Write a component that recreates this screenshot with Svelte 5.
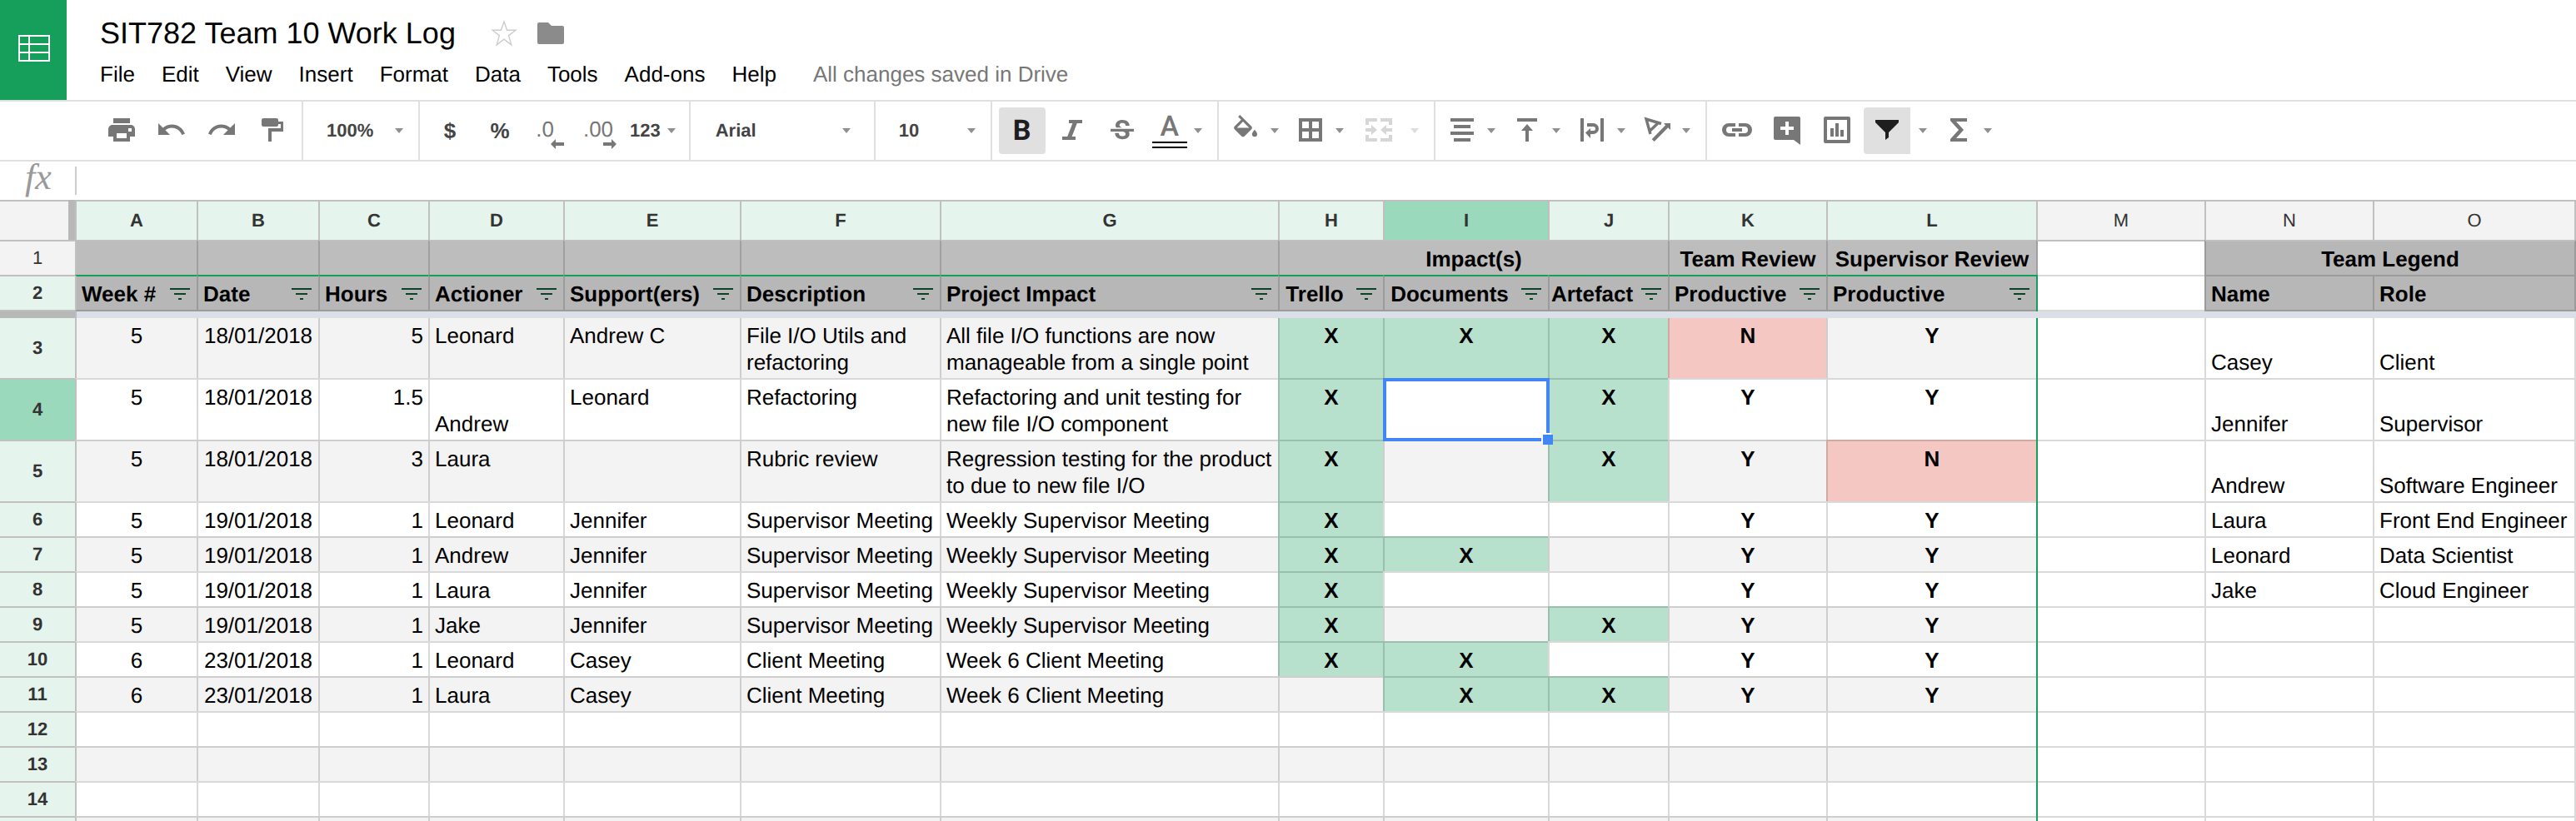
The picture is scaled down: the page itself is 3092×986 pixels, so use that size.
<script>
  const menus = ['File', 'Edit', 'View', 'Insert', 'Format', 'Data', 'Tools', 'Add-ons', 'Help'];

  const columns = [
    { id: 'A', width: 146 },
    { id: 'B', width: 146 },
    { id: 'C', width: 132 },
    { id: 'D', width: 162 },
    { id: 'E', width: 212 },
    { id: 'F', width: 240 },
    { id: 'G', width: 406 },
    { id: 'H', width: 126 },
    { id: 'I', width: 198 },
    { id: 'J', width: 144 },
    { id: 'K', width: 190 },
    { id: 'L', width: 252 },
    { id: 'M', width: 202, plain: true },
    { id: 'N', width: 202, plain: true },
    { id: 'O', width: 244, plain: true }
  ];

  const filters = [
    'Week #', 'Date', 'Hours', 'Actioner', 'Support(ers)', 'Description',
    'Project Impact', 'Trello', 'Documents', 'Artefact', 'Productive', 'Productive'
  ];

  const rows = [
    { n: 3, cells: ['5', '18/01/2018', '5', 'Leonard', 'Andrew C', 'File I/O Utils and\nrefactoring', 'All file I/O functions are now\nmanageable from a single point', 'X', 'X', 'X', 'N', 'Y', '', 'Casey', 'Client'] },
    { n: 4, cells: ['5', '18/01/2018', '1.5', 'Andrew', 'Leonard', 'Refactoring', 'Refactoring and unit testing for\nnew file I/O component', 'X', '', 'X', 'Y', 'Y', '', 'Jennifer', 'Supervisor'] },
    { n: 5, cells: ['5', '18/01/2018', '3', 'Laura', '', 'Rubric review', 'Regression testing for the product\nto due to new file I/O', 'X', '', 'X', 'Y', 'N', '', 'Andrew', 'Software Engineer'] },
    { n: 6, cells: ['5', '19/01/2018', '1', 'Leonard', 'Jennifer', 'Supervisor Meeting', 'Weekly Supervisor Meeting', 'X', '', '', 'Y', 'Y', '', 'Laura', 'Front End Engineer'] },
    { n: 7, cells: ['5', '19/01/2018', '1', 'Andrew', 'Jennifer', 'Supervisor Meeting', 'Weekly Supervisor Meeting', 'X', 'X', '', 'Y', 'Y', '', 'Leonard', 'Data Scientist'] },
    { n: 8, cells: ['5', '19/01/2018', '1', 'Laura', 'Jennifer', 'Supervisor Meeting', 'Weekly Supervisor Meeting', 'X', '', '', 'Y', 'Y', '', 'Jake', 'Cloud Engineer'] },
    { n: 9, cells: ['5', '19/01/2018', '1', 'Jake', 'Jennifer', 'Supervisor Meeting', 'Weekly Supervisor Meeting', 'X', '', 'X', 'Y', 'Y', '', '', ''] },
    { n: 10, cells: ['6', '23/01/2018', '1', 'Leonard', 'Casey', 'Client Meeting', 'Week 6 Client Meeting', 'X', 'X', '', 'Y', 'Y', '', '', ''] },
    { n: 11, cells: ['6', '23/01/2018', '1', 'Laura', 'Casey', 'Client Meeting', 'Week 6 Client Meeting', '', 'X', 'X', 'Y', 'Y', '', '', ''] },
    { n: 12, cells: Array(15).fill('') },
    { n: 13, cells: Array(15).fill('') },
    { n: 14, cells: Array(15).fill('') },
    { n: '', band: true, cells: Array(15).fill('') }
  ];

  function cellClass(row, text, i) {
    const list = [];
    if (i < 2) list.push('center');
    if (i === 2) list.push('right');
    if (i > 6 && i < 12) list.push('center', 'strong');
    if (i < 12 && (row.band || row.n % 2 === 1)) list.push('band');
    if (text === 'X') list.push('yes');
    if (text === 'N') list.push('no');
    if (i === 12) list.push('range-edge');
    if (i > 12 || (row.n === 4 && i === 3)) list.push('low');
    return list.join(' ');
  }
</script>

{#snippet caret(dim = false)}
  <svg class="caret" class:dim width="10" height="6" viewBox="0 0 10 6" aria-hidden="true"><path d="M0 0h10L5 6z" /></svg>
{/snippet}

<div class="page">
  <header>
    <a class="logo" href="#home" aria-label="Sheets home">
      <svg width="38" height="32" viewBox="0 0 38 32" fill="none" stroke="#fff" stroke-width="2">
        <path d="M1 1h36v30H1zM1 11h36M1 21h36M13 1v30" />
      </svg>
    </a>
    <div class="heading">
      <div class="title">
        <h1>SIT782 Team 10 Work Log</h1>
        <button class="star" aria-label="Star">
          <svg width="32" height="32" viewBox="0 0 32 32" fill="none" stroke="#ccc" stroke-width="1.4">
            <path d="M16 2l3.6 10.2H30l-8.4 6.4 3.2 11.2-8.8-6.7-8.8 6.7 3.2-11.2L2 12.2h10.4z" />
          </svg>
        </button>
        <button class="folder" aria-label="Move to folder">
          <svg width="32" height="26" viewBox="0 0 32 26" fill="#8b8b8b">
            <path d="M2 0h11l4 4h13a2 2 0 0 1 2 2v18a2 2 0 0 1-2 2H2a2 2 0 0 1-2-2V2a2 2 0 0 1 2-2z" />
          </svg>
        </button>
      </div>
      <nav>
        {#each menus as item}
          <button>{item}</button>
        {/each}
        <span class="status">All changes saved in Drive</span>
      </nav>
    </div>
  </header>

  <div class="toolbar">
    <div class="group tools">
      <button aria-label="Print">
        <svg class="icon" viewBox="0 0 36 36"><path fill-rule="evenodd" d="M8 4h20v6H8zM7 12h22a5 5 0 0 1 5 5v9h-6v6H8v-6H2v-9a5 5 0 0 1 5-5zM12 22v6h12v-6zM26 16v4h4v-4z" /></svg>
      </button>
      <button aria-label="Undo">
        <svg class="icon" viewBox="0 0 36 36"><path transform="translate(-1.1 -1) scale(1.56)" d="M12.5 8c-2.65 0-5.05.99-6.9 2.6L2 7v9h9l-3.62-3.62c1.39-1.16 3.16-1.88 5.12-1.88 3.54 0 6.55 2.31 7.6 5.5l2.37-.78C21.08 11.03 17.15 8 12.5 8z" /></svg>
      </button>
      <button aria-label="Redo">
        <svg class="icon" viewBox="0 0 36 36"><path transform="translate(37.1 -1) scale(-1.56 1.56)" d="M12.5 8c-2.65 0-5.05.99-6.9 2.6L2 7v9h9l-3.62-3.62c1.39-1.16 3.16-1.88 5.12-1.88 3.54 0 6.55 2.31 7.6 5.5l2.37-.78C21.08 11.03 17.15 8 12.5 8z" /></svg>
      </button>
      <button aria-label="Paint format">
        <svg class="icon" viewBox="0 0 36 36"><path d="M8 4h16a2 2 0 0 1 2 2v2h6v12H18v12h-4V16h15v-5h-3v1a2 2 0 0 1-2 2H8a2 2 0 0 1-2-2V6a2 2 0 0 1 2-2z" /></svg>
      </button>
    </div>

    <div class="group">
      <label class="drop">
        <select aria-label="Zoom"><option>100%</option></select>
        {@render caret()}
      </label>
    </div>

    <div class="group formats">
      <button class="sign">$</button>
      <button class="sign">%</button>
      <button class="decimal">
        <span>.0</span>
        <svg width="16" height="12" viewBox="0 0 16 12" aria-hidden="true"><path d="M0 6l6-6v4h10v4H6v4z" /></svg>
      </button>
      <button class="decimal">
        <span>.00</span>
        <svg width="16" height="12" viewBox="0 0 16 12" aria-hidden="true"><path d="M16 6l-6-6v4H0v4h10v4z" /></svg>
      </button>
      <button class="more">123{@render caret()}</button>
    </div>

    <div class="group">
      <label class="drop font">
        <select aria-label="Font"><option>Arial</option></select>
        {@render caret()}
      </label>
    </div>

    <div class="group">
      <label class="drop">
        <select aria-label="Font size"><option>10</option></select>
        {@render caret()}
      </label>
    </div>

    <div class="group styles">
      <button class="square on bold">B</button>
      <button class="square" aria-label="Italic">
        <svg class="icon" viewBox="0 0 36 36"><path d="M14 6h16v4h-6.200L17.600 26H22v4H6v-4h6.200L18.400 10H14z" /></svg>
      </button>
      <button class="square" aria-label="Strikethrough">
        <svg class="icon" viewBox="0 0 36 36"><path transform="translate(-.6 1.300) scale(1.55)" d="M7.240 8.750c-.26-.48-.39-1.030-.39-1.670 0-.61.13-1.160.4-1.670.26-.5.63-.93 1.110-1.290.48-.35 1.050-.63 1.700-.83.66-.19 1.390-.29 2.180-.29.81 0 1.540.11 2.210.34.66.22 1.230.54 1.690.94.47.4.83.88 1.080 1.430.25.55.38 1.150.38 1.810h-3.010c0-.31-.05-.59-.15-.85-.09-.27-.24-.49-.44-.68-.2-.19-.45-.33-.75-.44-.3-.1-.66-.16-1.060-.16-.39 0-.74.04-1.030.13-.29.09-.53.21-.72.36-.19.16-.34.34-.44.55-.1.21-.15.43-.15.66 0 .48.25.88.74 1.210.38.25.77.48 1.410.7H7.390c-.05-.08-.11-.17-.15-.25zM21 12v-2H3v2h9.620c.18.07.4.14.55.2.37.17.66.34.87.51.21.17.35.36.43.57.07.2.11.43.11.69 0 .23-.05.45-.14.66-.09.2-.23.38-.42.53-.19.15-.42.26-.71.35-.29.08-.63.13-1.010.13-.43 0-.83-.04-1.180-.13s-.66-.23-.91-.42c-.25-.19-.45-.44-.59-.75-.14-.31-.25-.76-.25-1.210H6.400c0 .55.08 1.130.24 1.580.16.45.37.85.65 1.210.28.35.6.66.98.92.37.26.78.48 1.220.65.44.17.9.3 1.380.39.48.08.96.13 1.440.13.8 0 1.530-.09 2.180-.28s1.210-.45 1.670-.79c.46-.34.82-.77 1.070-1.270s.38-1.070.38-1.710c0-.6-.1-1.140-.31-1.610-.05-.11-.11-.23-.17-.33H21z" /></svg>
      </button>
      <button class="color">
        <span class="ink">A</span>
        {@render caret()}
      </button>
    </div>

    <div class="group pairs">
      <button aria-label="Fill color">
        <svg class="icon" viewBox="0 0 36 36"><path transform="translate(-.5 0) scale(1.55)" d="M16.560 8.940L7.620 0 6.210 1.410l2.380 2.380-5.150 5.150c-.59.59-.59 1.540 0 2.120l5.500 5.500c.29.29.68.44 1.060.44s.77-.15 1.060-.44l5.500-5.500c.59-.58.59-1.530 0-2.120zM5.210 10L10 5.210 14.790 10H5.210zM19 11.500s-2 2.170-2 3.500c0 1.100.9 2 2 2s2-.9 2-2c0-1.330-2-3.500-2-3.500z" /></svg>
        {@render caret()}
      </button>
      <button aria-label="Borders">
        <svg class="icon" viewBox="0 0 36 36"><path fill-rule="evenodd" d="M4 4h28v28H4zM8 8v8h8V8zM20 8v8h8V8zM8 20v8h8v-8zM20 20v8h8v-8z" /></svg>
        {@render caret()}
      </button>
      <button aria-label="Merge cells" disabled>
        <svg class="icon wide" viewBox="0 0 48 36"><path d="M6 4h14v4H10v4H6zM24 4h14v8h-4V8H24zM6 24h4v4h10v4H6zM34 24h4v8H24v-4h10zM6 16h7v-4l7 6-7 6v-4H6zM38 16h-7v-4l-7 6 7 6v-4h7z" /></svg>
        {@render caret(true)}
      </button>
    </div>

    <div class="group pairs">
      <button aria-label="Horizontal align">
        <svg class="icon" viewBox="0 0 36 36"><path d="M4 4h28v4H4zM8 12h20v4H8zM4 20h28v4H4zM8 28h20v4H8z" /></svg>
        {@render caret()}
      </button>
      <button aria-label="Vertical align">
        <svg class="icon" viewBox="0 0 36 36"><path d="M6 4h24v4H6zM18 11l7 8h-5v13h-4V19h-5z" /></svg>
        {@render caret()}
      </button>
      <button aria-label="Text wrapping">
        <svg class="icon" viewBox="0 0 36 36"><path d="M4 4h4v28H4zM28 4h4v28h-4zM12 10h7.500a6.500 6.500 0 0 1 0 13H16v5l-6-6.500 6-5.500v3h3.500a2.500 2.500 0 0 0 0-5H12z" /></svg>
        {@render caret()}
      </button>
      <button aria-label="Text rotation">
        <svg class="icon" viewBox="0 0 36 36"><path d="M11.700 29.300L28.200 12.200 26 10h8v8l-2.800-2.800L14.700 32z" /><path d="M23 10.500L5 5l5 18M19 10l-9.500 9" fill="none" stroke="#777" stroke-width="3.400" /></svg>
        {@render caret()}
      </button>
    </div>

    <div class="group inserts">
      <button aria-label="Insert link">
        <svg class="icon" viewBox="0 0 36 36"><path d="M16 10v4H9a4 4 0 0 0 0 8h7v4H8a8 8 0 0 1 0-16zM20 10h8a8 8 0 0 1 0 16h-8v-4h7a4 4 0 0 0 0-8h-7zM12 16h12v4H12z" /></svg>
      </button>
      <button aria-label="Insert comment">
        <svg class="icon" viewBox="0 0 36 36"><path fill-rule="evenodd" d="M4 2h28a2 2 0 0 1 2 2v32l-8-6H4a2 2 0 0 1-2-2V4a2 2 0 0 1 2-2zM16 8v6h-6v4h6v6h4v-6h6v-4h-6V8z" /></svg>
      </button>
      <button aria-label="Insert chart">
        <svg class="icon" viewBox="0 0 36 36"><path fill-rule="evenodd" d="M4 2h28a2 2 0 0 1 2 2v28a2 2 0 0 1-2 2H4a2 2 0 0 1-2-2V4a2 2 0 0 1 2-2zM6 6v24h24V6zM10 16h4v10h-4zM16 10h4v16h-4zM22 18h4v8h-4z" /></svg>
      </button>
      <button class="square on filter" aria-label="Filter">
        <svg class="icon" viewBox="0 0 36 36"><path d="M4 6h28v3L20 21v6l-4 3v-9L4 9z" /></svg>
      </button>
      <button class="views" aria-label="Filter views">{@render caret()}</button>
      <button class="sum" aria-label="Functions">
        <svg class="icon" viewBox="0 0 36 36"><path d="M8 4h20v4H15l9 10-9 10h13v4H8v-3l10-11L8 7z" /></svg>
        {@render caret()}
      </button>
    </div>
  </div>

  <div class="formula">
    <label for="formula">fx</label>
    <input id="formula" type="text" />
  </div>

  <table>
    <colgroup>
      <col style="width: 90px" />
      {#each columns as col}
        <col style="width: {col.width}px" />
      {/each}
    </colgroup>
    <thead>
      <tr class="letters">
        <th class="corner"></th>
        {#each columns as col}
          <th scope="col" class:plain={col.plain} class:active={col.id === 'I'}>{col.id}</th>
        {/each}
      </tr>
      <tr class="top">
        <th class="num plain" scope="row">1</th>
        {#each columns.slice(0, 7) as _}
          <td></td>
        {/each}
        <td colspan="3">Impact(s)</td>
        <td>Team Review</td>
        <td>Supervisor Review</td>
        <td class="blank"></td>
        <td colspan="2" class="legend">Team Legend</td>
      </tr>
      <tr class="names">
        <th class="num" scope="row">2</th>
        {#each filters as name, i}
          <td class="filtered" class:middle={i > 6 && i < 10}>
            <div>
              <span>{name}</span>
              <button aria-label="Filter {name}">
                <svg width="24" height="14" viewBox="0 0 24 14" fill="#0b4228"><path d="M0 0h24v2H0zM5 6h14v2H5zM10 12h4v2h-4z" /></svg>
              </button>
            </div>
          </td>
        {/each}
        <td class="blank range-edge"></td>
        <td>Name</td>
        <td>Role</td>
      </tr>
      <tr class="freeze">
        <th></th>
        <td colspan="15"></td>
      </tr>
    </thead>
    <tbody>
      {#each rows as row}
        <tr>
          <th class="num" class:active={row.n === 4} scope="row">{row.n}</th>
          {#each row.cells as text, i}
            {#if row.n === 4 && i === 8}
              <td class="selected"><span class="outline"></span><span class="handle"></span></td>
            {:else}
              <td class={cellClass(row, text, i)}>{text}</td>
            {/if}
          {/each}
        </tr>
      {/each}
    </tbody>
  </table>
</div>

<style>
  :global(body) {
    background: #fff;
  }
  .page {
    --line: rgba(0, 0, 0, 0.15);
    --rule: #e0e0e0;
    --edge: #c0c0c0;
    --green: #169f5b;
    height: 100vh;
    overflow: hidden;
    color: #000;
    font: 26px/32px 'Liberation Sans', Arial, sans-serif;
    text-rendering: geometricPrecision;
  }
  button,
  select,
  input {
    margin: 0;
    padding: 0;
    border: 0;
    background: none;
    color: inherit;
    font: inherit;
    text-rendering: inherit;
  }
  svg {
    display: block;
    flex: none;
  }

  header {
    display: flex;
    height: 120px;
  }
  .logo {
    display: grid;
    place-items: center;
    width: 80px;
    background: var(--green);
    box-sizing: border-box;
    padding: 0 0 4px 2px;
  }
  .heading {
    display: flex;
    flex-direction: column;
    gap: 13px;
    padding: 20px 0 0 40px;
  }
  .title {
    display: flex;
    align-items: center;
  }
  h1 {
    margin: 0;
    font-size: 36px;
    line-height: 40px;
    font-weight: 400;
  }
  .star {
    margin-left: 42px;
  }
  .folder {
    margin-left: 24px;
  }
  nav {
    display: flex;
    gap: 32px;
  }
  .status {
    margin-left: 12px;
    color: #777;
  }

  .toolbar {
    display: flex;
    height: 70px;
    border-top: 2px solid var(--rule);
    border-bottom: 2px solid var(--rule);
    color: #444;
    font-size: 22px;
    font-weight: 700;
  }
  .group {
    display: flex;
    align-items: center;
    border-right: 2px solid var(--rule);
  }
  .group button {
    display: flex;
    align-items: center;
  }
  .icon {
    width: 36px;
    height: 36px;
    fill: #777;
    margin-bottom: 2px;
  }
  .icon.wide {
    width: 48px;
  }
  button:disabled .icon {
    fill: #d6d6d6;
  }
  .caret {
    fill: #8f8f8f;
  }
  .caret.dim {
    fill: #dcdcdc;
  }
  .tools {
    gap: 24px;
    padding: 0 18px 0 128px;
  }
  .drop {
    display: grid;
    align-items: center;
    width: 138px;
  }
  .drop.font {
    width: 220px;
  }
  .drop select,
  .drop .caret {
    grid-area: 1 / 1;
  }
  .drop select {
    appearance: none;
    padding-left: 28px;
    height: 56px;
  }
  .drop .caret {
    justify-self: end;
    margin-right: 18px;
    pointer-events: none;
  }
  .drop.font select {
    padding-left: 30px;
  }
  .drop.font .caret {
    margin-right: 28px;
  }
  .formats {
    padding: 0 16px 0 6px;
  }
  .formats .sign,
  .formats .decimal {
    justify-content: center;
    width: 60px;
    font-size: 26px;
  }
  .formats .decimal {
    display: grid;
    justify-content: center;
    color: #777;
    font-weight: 400;
  }
  .formats .decimal svg {
    fill: #777;
    justify-self: end;
    margin-top: -8px;
  }
  .formats .decimal span {
    padding-right: 4px;
    line-height: 40px;
  }
  .formats .decimal:nth-child(3) span {
    padding-right: 12px;
  }
  .formats .more {
    gap: 8px;
    padding-left: 6px;
  }
  .styles {
    gap: 4px;
    padding: 0 18px 0 8px;
  }
  .group .square {
    justify-content: center;
    width: 56px;
    height: 56px;
    border-radius: 4px;
  }
  .group .on {
    background: #e0e0e0;
    color: #1e1e1e;
  }
  .on .icon {
    fill: #1e1e1e;
  }
  .bold,
  .ink {
    font-family: Roboto, sans-serif;
    font-size: 34px;
  }
  .styles .color {
    gap: 8px;
    padding-left: 4px;
  }
  .ink {
    width: 42px;
    height: 32px;
    margin-bottom: 4px;
    line-height: 28px;
    border-bottom: 2px solid #000;
    box-shadow: 0 4px #fff, 0 6px #000;
    color: #777;
    font-weight: 500;
    text-align: center;
  }
  .pairs {
    gap: 20px;
    padding: 0 18px 0 14px;
  }
  .pairs button,
  .sum {
    gap: 12px;
  }
  .inserts {
    gap: 24px;
    padding-left: 18px;
    border-right: 0;
  }
  .inserts .filter {
    margin-left: -10px;
    border-radius: 4px 0 0 4px;
  }
  .inserts .views {
    margin-left: -14px;
  }
  .inserts .sum {
    margin-left: -4px;
  }

  .formula {
    display: flex;
    align-items: center;
    height: 46px;
  }
  .formula label {
    align-self: flex-start;
    width: 60px;
    padding-left: 30px;
    color: #999;
    font: italic 44px/38px 'Liberation Serif', serif;
  }
  .formula input {
    flex: 1;
    height: 34px;
    padding-left: 6px;
    border-left: 2px solid #ccc;
    outline: 0;
  }

  table {
    width: 100%;
    table-layout: fixed;
    border-collapse: separate;
    border-spacing: 0;
  }
  th,
  td {
    box-sizing: border-box;
    height: 42px;
    border: 0 solid var(--line);
    border-width: 2px 0 0 2px;
  }
  td {
    padding: 5px 6px 3px;
    text-align: left;
    vertical-align: top;
    white-space: pre;
  }
  td:last-child,
  th:last-child {
    border-right-width: 2px;
  }
  th {
    padding: 0;
    background: #e5f4ec;
    border-color: var(--edge);
    color: #333;
    font-size: 22px;
    font-weight: 700;
    text-align: center;
    vertical-align: middle;
  }
  th.plain {
    background: #f3f3f3;
    font-weight: 400;
  }
  th.active {
    background: #9ad9bb;
  }
  .letters th {
    height: 48px;
  }
  .letters .corner {
    border-left: 0;
    border-right: 8px solid #b8b8b8;
    background: #f3f3f3;
    box-shadow: inset 0 2px var(--edge);
    border-top: 0;
  }
  .num {
    border-left: 0;
  }
  .num + td {
    border-left-color: var(--edge);
  }
  .top td,
  .names td {
    background: #b7b7b7;
    font-weight: 700;
  }
  .top td {
    background: #bdbdbd;
    border-top-color: var(--edge);
    text-align: center;
  }
  .top .legend {
    background: #b7b7b7;
  }
  .top .blank,
  .names .blank {
    background: #fff;
  }
  .top .blank {
    border-left-color: #a0a0a0;
  }
  .names td,
  .names th {
    height: 44px;
    border-bottom-width: 2px;
  }
  .names .filtered {
    border-top-color: var(--green);
    padding-right: 8px;
  }
  .filtered div {
    display: flex;
    align-items: center;
    justify-content: space-between;
  }
  .filtered.middle {
    padding-left: 0;
  }
  .middle span {
    flex: 1;
    text-align: center;
    margin-right: 8px;
  }
  /* Right boundary of the filtered range, drawn over the grid lines */
  .range-edge {
    position: relative;
  }
  .range-edge::before {
    content: '';
    position: absolute;
    inset: -2px auto 0 -2px;
    width: 2px;
    background: var(--green);
  }
  tbody tr:first-child .range-edge::before {
    top: 0;
  }
  .names .range-edge::before {
    bottom: -2px;
  }
  .freeze th,
  .freeze td {
    height: 8px;
    padding: 0;
    border-top: 0;
    border-right: 0;
    background: #dadfe8;
  }
  .freeze th {
    border-left: 0;
    background: #b8b8b8;
  }
  tbody tr:first-child > * {
    border-top-width: 0;
  }
  .center {
    text-align: center;
  }
  .right {
    text-align: right;
  }
  .strong {
    font-weight: 700;
  }
  .low {
    vertical-align: bottom;
  }
  .band {
    background: #f3f3f3;
  }
  .yes {
    background: #b7e1cd;
  }
  .no {
    background: #f4c7c3;
  }
  .selected {
    position: relative;
  }
  .outline {
    position: absolute;
    inset: -2px;
    border: 4px solid #4285f4;
    z-index: 1;
  }
  .handle {
    position: absolute;
    right: -6px;
    bottom: -6px;
    width: 12px;
    height: 12px;
    background: #4285f4;
    box-shadow: -2px -2px #fff;
    z-index: 2;
  }
</style>
